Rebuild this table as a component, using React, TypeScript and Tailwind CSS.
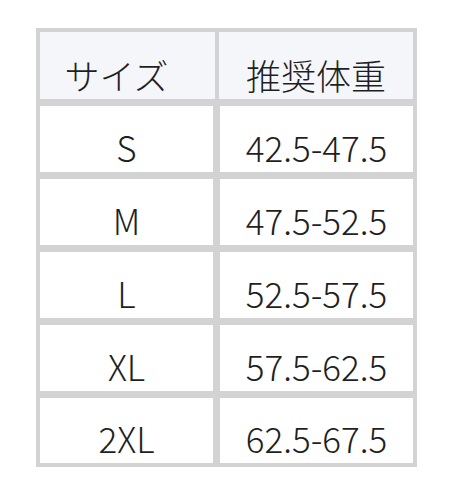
const ROWS = [
  ['S', '42.5-47.5'],
  ['M', '47.5-52.5'],
  ['L', '52.5-57.5'],
  ['XL', '57.5-62.5'],
  ['2XL', '62.5-67.5'],
];

export default function App() {
  return (
    <div
      className="w-[452px] h-[495px] bg-white pt-[28px] pl-[36px] text-[#1f1f1f]"
      style={{ fontFamily: '"Noto Sans CJK JP", "Noto Sans", sans-serif' }}
    >
      <div className="w-[381px] border-4 border-[#d3d3d3] bg-[#d3d3d3] flex flex-col gap-[7px]">
        {/* header */}
        <div className="flex h-[67px] gap-[4px]">
          <div className="w-[175px] bg-[#f5f6fa] flex items-end justify-center pb-[7px] pr-[22px] text-[35px] leading-[35px] font-light">
            サイズ
          </div>
          <div className="flex-1 bg-[#f5f6fa] flex items-end justify-center pb-[7px] text-[35px] leading-[35px] font-light">
            推奨体重
          </div>
        </div>
        {ROWS.map(([size, weight], i) => (
          <div key={size} className={`flex gap-[7px] ${i === ROWS.length - 1 ? 'h-[65px]' : 'h-[66px]'}`}>
            <div className="w-[173px] bg-white flex items-end justify-center pb-[8px] text-[35px] leading-[35px] font-light">
              {size}
            </div>
            <div className="flex-1 bg-white flex items-end justify-center pb-[8px] text-[35px] leading-[35px] font-light">
              {weight}
            </div>
          </div>
        ))}
      </div>
    </div>
  );
}
